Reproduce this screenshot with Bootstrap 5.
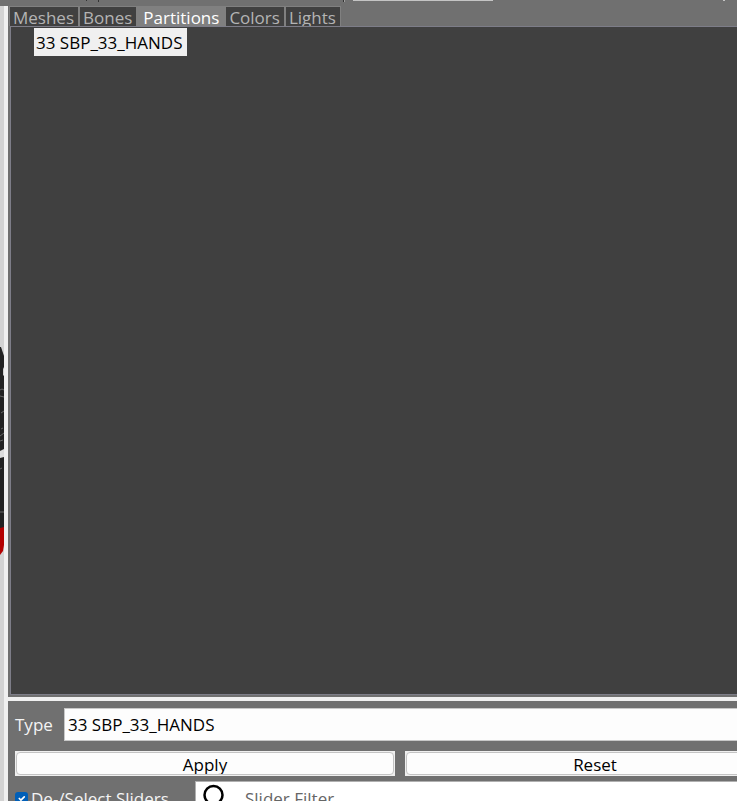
<!DOCTYPE html>
<html lang="en">
<head>
<meta charset="utf-8">
<meta name="viewport" content="width=device-width, initial-scale=1">
<title>Partitions</title>
<link href="https://cdn.jsdelivr.net/npm/bootstrap@5.3.0/dist/css/bootstrap.min.css" rel="stylesheet">
<style>
body { font: 17px/24px "Open Sans", "Noto Sans", sans-serif; background: #707070; color: #f4f4f4; }
.toolbar-edge { height: 6px; background: #707070; }
.toolbar-edge svg { display: block; width: 100%; height: 6px; }
.viewport-edge { width: 4px; background: #d3d3d3; }
.viewport-edge svg { display: block; width: 4px; margin-top: 340px; }
.sash { width: 4px; background: #f0f0f0; }
.side-panel { background: #707070; }
.tab-strip { height: 20px; padding-left: 1px; }
.tab-strip .tab-item { height: 20px; padding: 0 4px 0 3px; border: 1px solid #808080; border-bottom-width: 0; border-radius: 0; background: #404040; color: #b4b4b4; line-height: 22px; overflow: hidden; }
.tab-strip .tab-item.active { background: #808080; color: #fff; padding: 0 5px; }
.tree { background: #404040; border: 1px solid #7d7d88; border-right: 0; margin: 0 0 2px 2px; padding: 1px 0 0 23px; }
.tree-row { background: #f0f0f0; color: #000; height: 28px; line-height: 27px; padding: 1px 5px 0 2px; border: 0; }
.hsash { height: 4px; background: #f0f0f0; }
.options { height: 100px; padding: 7px 0 0 7px; }
.options-body { margin-right: -48px; }
.type-label { width: 49px; }
.options .type-select { height: 33px; border: 1px solid #c8c8c8; border-radius: 0; background: #fdfdfd; color: #000; font-size: 17px; line-height: 24px; padding: 4px 3px; }
.buttons { gap: 10px; margin-top: 10px; }
.push { height: 25px; border: 1px solid #f0f0f0; border-radius: 0; background: #f0f0f0; padding: 0; color: #000; font-size: 17px; flex: 1 1 0; }
.push span { display: block; height: 23px; border: 1px solid #c4c4c4; border-radius: 4px; background: #fdfdfd; line-height: 24px; overflow: hidden; }
.filter-row { margin-top: 5px; }
.slider-toggle { width: 180px; padding-top: 6px; }
.slider-toggle .form-check-input { width: 13px; height: 13px; margin: 5px 3px 0 0; border: 0; border-radius: 3px; background-color: #005fb8; background-size: 11px; }
.filter { height: 34px; background: #fff; border: 1px solid #b0b0b0; padding-left: 6px; }
.filter svg { width: 26px; height: 28px; margin-top: 2px; }
.filter input { border: 0; color: #000; font-size: 17px; line-height: 24px; padding: 3px 0 1px 17px; min-width: 0; outline: 0; }
.filter input::placeholder { color: #666; opacity: 1; }
</style>
<script src="https://cdn.jsdelivr.net/npm/bootstrap@5.3.0/dist/js/bootstrap.bundle.min.js"></script>
</head>
<body class="vh-100 overflow-hidden d-flex flex-column">
<header class="toolbar-edge flex-shrink-0">
  <svg aria-hidden="true"><path d="M86.500 0v1M98.500 0v2M343.500 0v2" stroke="#333"/><path d="M344.500 0v2" stroke="#a0a0a0"/><path d="M353 .5h140M723 .5h2" stroke="#c4c4c4"/></svg>
</header>
<div class="d-flex flex-grow-1 overflow-hidden">
  <div class="viewport-edge flex-shrink-0 overflow-hidden">
    <svg viewBox="0 346 4 212" height="212" aria-hidden="true">
      <path d="M0 347h1l1 3 1 3 1 3v172H0z" fill="#222"/>
      <path d="M0 528l4-1v18l-1 6-3 4z" fill="#b40000"/>
      <path d="M4 367l-1 2v6l1 1z" fill="#d3d3d3"/>
      <path d="M0 390l2-1 2 1M0 396l4 1M1 413l3-2M1 429l2-1M0 436l4-3M0 441l3-1M0 469l2-1M0 512h4" stroke="#666" fill="none"/>
      <path d="M0 451l4-2v8l-4 1z" fill="#ddd"/>
    </svg>
  </div>
  <div class="sash flex-shrink-0"></div>
  <main class="side-panel d-flex flex-column flex-grow-1 overflow-hidden">
    <nav class="tab-strip d-flex flex-shrink-0" role="tablist">
      <button class="tab-item" type="button" role="tab">Meshes</button>
      <button class="tab-item" type="button" role="tab">Bones</button>
      <button class="tab-item active" type="button" role="tab" aria-selected="true">Partitions</button>
      <button class="tab-item" type="button" role="tab">Colors</button>
      <button class="tab-item" type="button" role="tab">Lights</button>
    </nav>
    <div class="tree flex-grow-1">
      <button class="tree-row d-block" type="button">33 SBP_33_HANDS</button>
    </div>
    <div class="hsash flex-shrink-0"></div>
    <form class="options flex-shrink-0 overflow-hidden">
      <div class="options-body">
        <div class="d-flex align-items-center">
          <label class="type-label flex-shrink-0" for="type">Type</label>
          <select class="form-select type-select" id="type"><option>33 SBP_33_HANDS</option></select>
        </div>
        <div class="buttons d-flex">
          <button class="push" type="button"><span>Apply</span></button>
          <button class="push" type="button"><span>Reset</span></button>
        </div>
        <div class="filter-row d-flex">
          <div class="slider-toggle d-flex flex-shrink-0">
            <input class="form-check-input flex-shrink-0" type="checkbox" id="sliders" checked>
            <label class="text-nowrap" for="sliders">De-/Select Sliders</label>
          </div>
          <div class="filter d-flex flex-grow-1">
            <svg class="flex-shrink-0" viewBox="0 0 26 28" aria-hidden="true"><circle cx="11.500" cy="11" r="9" fill="none" stroke="#000" stroke-width="2.500"/><path d="M17 18l7 7" stroke="#000" stroke-width="3"/></svg>
            <input class="flex-grow-1" type="text" aria-label="Slider Filter" placeholder="Slider Filter">
          </div>
        </div>
      </div>
    </form>
  </main>
</div>
</body>
</html>
